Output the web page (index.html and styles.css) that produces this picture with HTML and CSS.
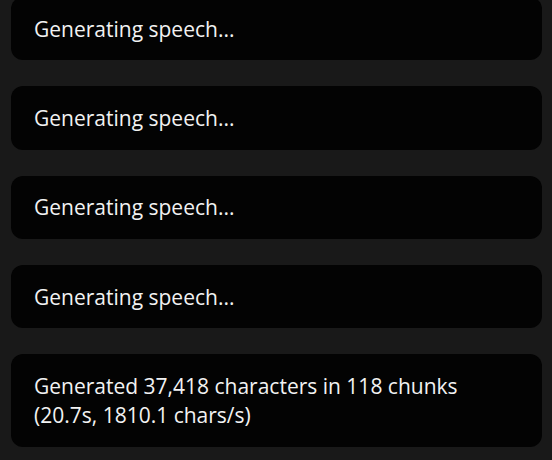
FILE: index.html
```html
<!DOCTYPE html>
<html>
<head>
<meta charset="utf-8">
<link rel="stylesheet" href="styles.css">
</head>
<body>
<div class="list">
  <div class="card">Generating speech...</div>
  <div class="card">Generating speech...</div>
  <div class="card">Generating speech...</div>
  <div class="card">Generating speech...</div>
  <div class="card">Generated 37,418 characters in 118 chunks (20.7s, 1810.1 chars/s)</div>
</div>
</body>
</html>
```
FILE: styles.css
```css
html, body {
  margin: 0;
  padding: 0;
  background: #191919;
}
body {
  font-family: "Open Sans", "Noto Sans", sans-serif;
  color: #f2f2f2;
  overflow: hidden;
  height: 460px;
}
.list {
  display: flex;
  flex-direction: column;
  gap: 25.8px;
  margin-top: -3px;
  padding: 0 10px 0 11px;
}
.card {
  background: #030303;
  border-radius: 12px;
  padding: 17.8px 40px 16.7px 23px;
  font-size: 21px;
  line-height: 29px;
}
```
